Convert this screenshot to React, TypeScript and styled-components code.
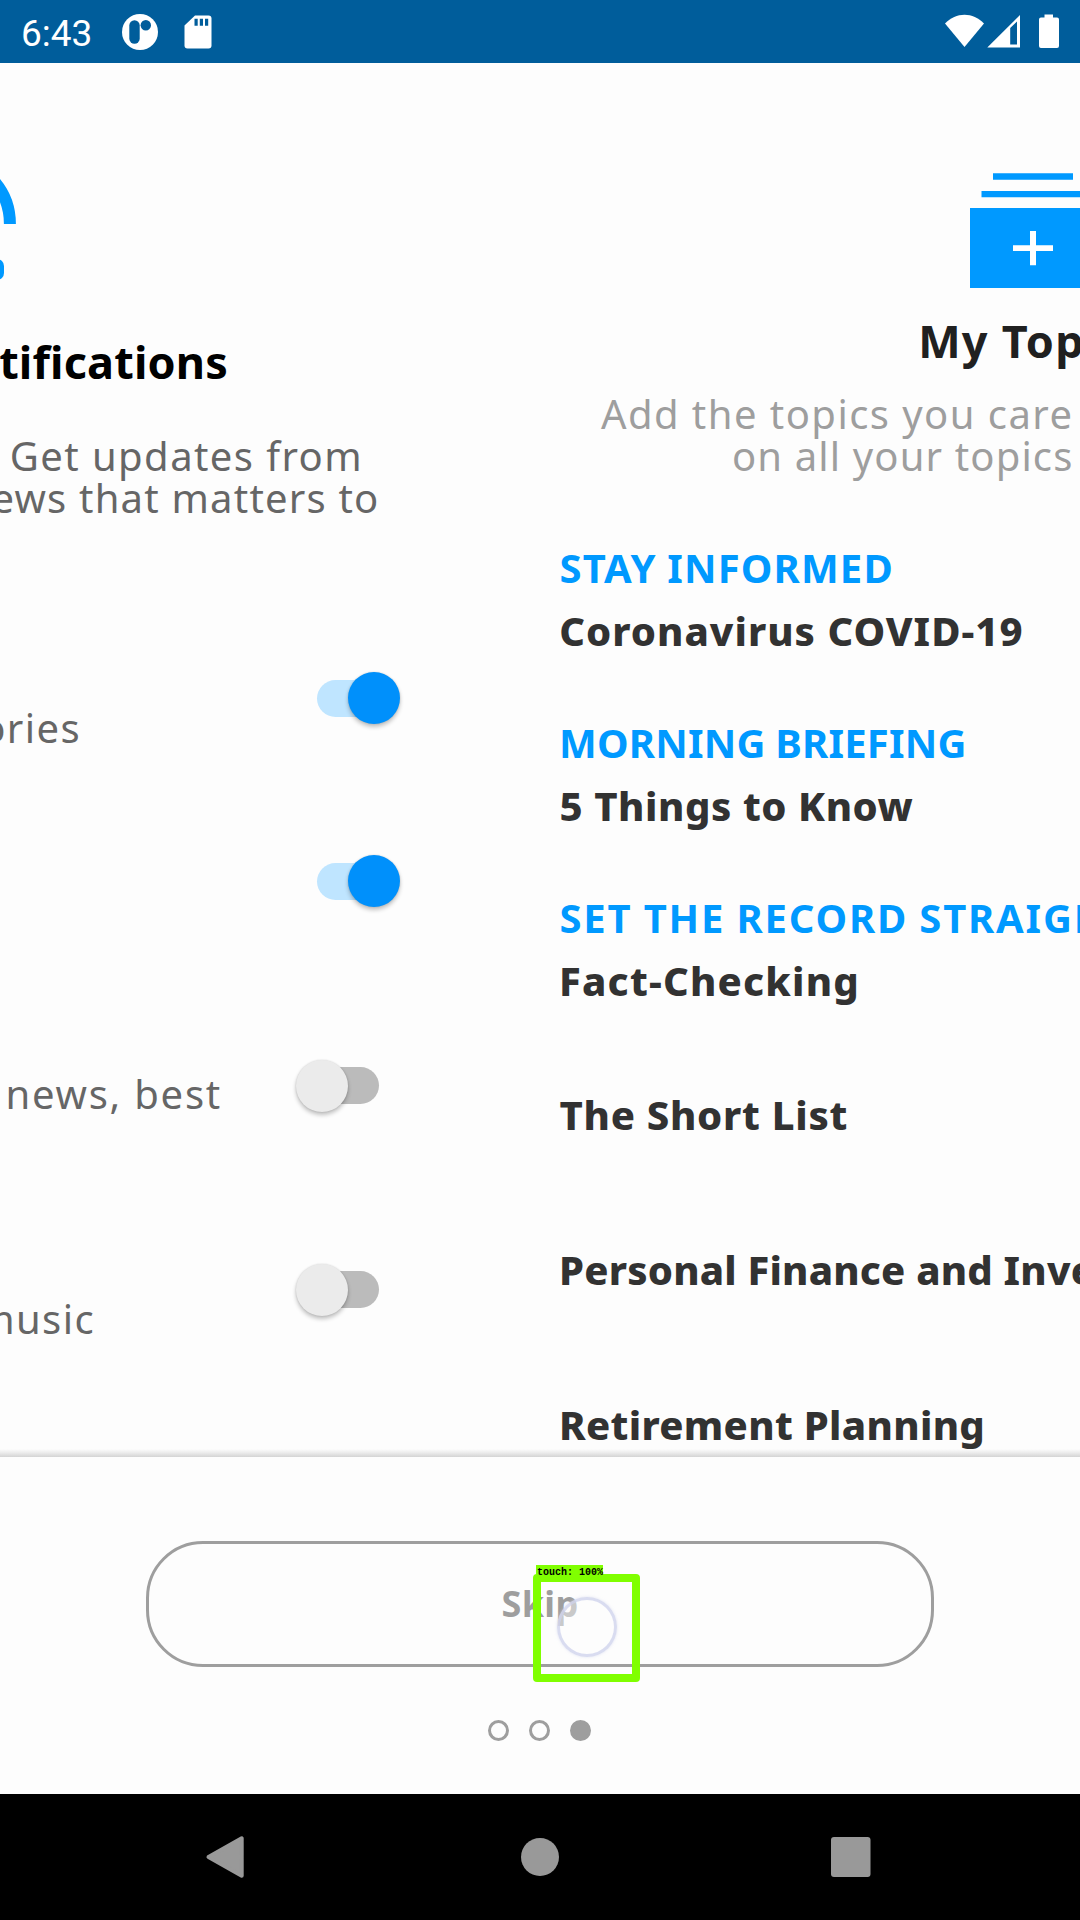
import React from "react";
import styled, { createGlobalStyle } from "styled-components";

const blue = "#0099ff";
const grey = "#9e9e9e";

const GlobalStyle = createGlobalStyle`
  * { box-sizing: border-box; }
  body { margin: 0; background: #fdfdfd; }
`;

const Screen = styled.div`
  position: relative;
  display: flex;
  flex-direction: column;
  width: 1080px;
  height: 1920px;
  overflow: hidden;
  background: #fdfdfd;
  font-family: "Noto Sans", "Liberation Sans", sans-serif;
`;

const StatusBar = styled.header`
  display: flex;
  align-items: center;
  flex: none;
  height: 63px;
  padding: 0 21px 0 21px;
  background: #005d9b;
  color: #fff;
`;

const Clock = styled.time`
  width: 101px;
  font: 400 37px/63px Roboto, sans-serif;
  padding-top: 3px;
`;

const StatusIcons = styled.div<{ $end?: boolean }>`
  display: flex;
  margin-left: ${(p) => (p.$end ? "auto" : "0")};
`;

const Pager = styled.main`
  display: flex;
  flex: none;
  height: 1394px;
  overflow: hidden;
`;

const NotificationsPage = styled.section`
  display: flex;
  flex-direction: column;
  flex: none;
  width: 493px;
  overflow: hidden;
`;

const TopicsPage = styled.section`
  display: flex;
  flex-direction: column;
  flex: none;
  width: 1080px;
`;

const BellArt = styled.svg`
  display: block;
  flex: none;
  width: 40px;
  height: 140px;
  margin-top: 87px;
`;

const StackArt = styled.svg`
  display: block;
  flex: none;
  align-self: center;
  width: 126px;
  height: 120px;
  margin-top: 107px;
`;

const Title = styled.h1<{ $color: string; $top: number; $track: number }>`
  margin: ${(p) => p.$top}px 0 0;
  color: ${(p) => p.$color};
  font-size: 45px;
  font-weight: 700;
  line-height: 60px;
  letter-spacing: ${(p) => p.$track}px;
  white-space: nowrap;
`;

const LeftTitle = styled(Title)`
  align-self: flex-end;
  padding-right: 265px;
`;

const CenterTitle = styled(Title)`
  align-self: center;
`;

const Copy = styled.div<{ $color: string; $top: number }>`
  display: flex;
  flex-direction: column;
  align-items: flex-end;
  margin-top: ${(p) => p.$top}px;
  color: ${(p) => p.$color};
`;

const CopyLine = styled.span<{ $track: number; $right: number }>`
  padding-right: ${(p) => p.$right}px;
  font-size: 40px;
  font-weight: 400;
  line-height: 42px;
  letter-spacing: ${(p) => p.$track}px;
  white-space: nowrap;
`;

const Settings = styled.div`
  display: flex;
  flex-direction: column;
  margin-top: 111px;
`;

const SettingRow = styled.div<{ $height: number }>`
  display: flex;
  flex: none;
  justify-content: space-between;
  height: ${(p) => p.$height}px;
  padding: 42.5px 93.5px 0 0;
`;

const SettingText = styled.p<{ $top: number; $width: number; $track: number }>`
  display: flex;
  justify-content: flex-end;
  width: ${(p) => p.$width}px;
  margin: ${(p) => p.$top}px 0 0;
  color: #666;
  font-size: 40px;
  font-weight: 400;
  line-height: 42px;
  letter-spacing: ${(p) => p.$track}px;
  white-space: nowrap;
`;

const Switch = styled.div`
  display: grid;
  flex: none;
  align-items: center;
  width: 104px;
  height: 52px;
  margin-left: auto;
`;

const Track = styled.span<{ $on: boolean }>`
  grid-area: 1 / 1;
  justify-self: center;
  width: 62px;
  height: 37px;
  border-radius: 19px;
  background: ${(p) => (p.$on ? "#bfe5ff" : "#bbbbbb")};
`;

const Thumb = styled.span<{ $on: boolean }>`
  grid-area: 1 / 1;
  justify-self: ${(p) => (p.$on ? "end" : "start")};
  width: 52px;
  height: 52px;
  border-radius: 50%;
  background: ${(p) => (p.$on ? "#0090fb" : "#ebebeb")};
  box-shadow: 0 3px 4px rgba(0, 0, 0, 0.24), 0 0 2px rgba(0, 0, 0, 0.14);
`;

const TopicList = styled.div`
  display: flex;
  flex-direction: column;
  padding: 59px 0 0 66px;
`;

const Topic = styled.article<{ $height: number }>`
  display: flex;
  flex-direction: column;
  flex: none;
  height: ${(p) => p.$height}px;
`;

const Kicker = styled.span<{ $track: number; $nudge: number }>`
  margin-left: ${(p) => p.$nudge}px;
  color: ${blue};
  font-size: 40px;
  font-weight: 700;
  line-height: 63px;
  letter-spacing: ${(p) => p.$track}px;
  word-spacing: -1px;
  white-space: nowrap;
`;

const Headline = styled.h2<{ $track: number; $nudge: number }>`
  margin: 0 0 0 ${(p) => p.$nudge}px;
  color: #323232;
  font-size: 40px;
  font-weight: 800;
  line-height: 63px;
  letter-spacing: ${(p) => p.$track}px;
  white-space: nowrap;
`;

const Footer = styled.footer`
  position: relative;
  display: flex;
  flex: none;
  flex-direction: column;
  align-items: center;
  height: 337px;
  padding-top: 84px;
  background: #fdfdfd;
`;

const FooterShade = styled.div`
  position: absolute;
  top: -8px;
  left: 0;
  right: 0;
  height: 8px;
  background: linear-gradient(rgba(200, 200, 200, 0), rgba(190, 190, 190, 0.3) 50%, #d4d4d4);
`;

const SkipButton = styled.button`
  width: 788px;
  height: 126px;
  padding: 0 0 1px 0;
  border: 3px solid ${grey};
  border-radius: 57px;
  background: transparent;
  color: ${grey};
  font: 700 36px/1 "Noto Sans", sans-serif;
  letter-spacing: 0.36px;
`;

const Dots = styled.div`
  display: flex;
  gap: 20px;
  margin-top: 53px;
  padding-right: 2px;
`;

const Dot = styled.span<{ $current?: boolean }>`
  width: 21px;
  height: 21px;
  border: 3px solid ${grey};
  border-radius: 50%;
  background: ${(p) => (p.$current ? grey : "transparent")};
`;

const NavBar = styled.nav`
  display: flex;
  flex: none;
  align-items: center;
  justify-content: space-between;
  height: 126px;
  padding: 0 203px 0 202px;
  background: #000;
`;

const TouchMark = styled.div`
  position: absolute;
  left: 533px;
  top: 1565px;
  display: flex;
  flex-direction: column;
  width: 107px;
`;

const TouchLabel = styled.span`
  align-self: flex-start;
  height: 12px;
  margin: 0 0 -3px 3px;
  padding-left: 1px;
  background: #80ff00;
  color: #000;
  font: 700 10px/15px "Liberation Mono", monospace;
  z-index: 1;
`;

const TouchBox = styled.div`
  display: flex;
  align-items: center;
  justify-content: center;
  width: 107px;
  height: 108px;
  border: 8px solid #80ff00;
  border-radius: 4px;
`;

const TouchRing = styled.span`
  width: 60px;
  height: 60px;
  margin: -2px 0 0 0;
  border: 3px solid rgba(205, 210, 236, 0.75);
  border-radius: 50%;
  background: rgba(253, 253, 253, 0.45);
  box-shadow: 0 0 3px rgba(205, 210, 236, 0.6);
`;

type TopicItem = {
  kicker?: string;
  title: string;
  height: number;
  kTrack?: number;
  kNudge?: number;
  track: number;
  nudge: number;
};

const topics: TopicItem[] = [
  { kicker: "STAY INFORMED", title: "Coronavirus COVID-19", height: 175, kTrack: 1.15, kNudge: 0.5, track: 1.02, nudge: 0.3 },
  { kicker: "MORNING BRIEFING", title: "5 Things to Know", height: 175, kTrack: 0.2, kNudge: 0, track: 0.57, nudge: 0.5 },
  { kicker: "SET THE RECORD STRAIGHT", title: "Fact-Checking", height: 197, kTrack: 1.82, kNudge: 0.5, track: 1.22, nudge: 0 },
  { title: "The Short List", height: 155, track: 0.72, nudge: 0.5 },
  { title: "Personal Finance and Investing", height: 155, track: 0.2, nudge: 0 },
  { title: "Retirement Planning", height: 63, track: 0.32, nudge: 0 },
];

function Toggle({ on = false }: { on?: boolean }) {
  return (
    <Switch role="switch" aria-checked={on}>
      <Track $on={on} />
      <Thumb $on={on} />
    </Switch>
  );
}

export default function App() {
  return (
    <Screen>
      <GlobalStyle />
      <StatusBar>
        <Clock>6:43</Clock>
        <StatusIcons>
          <svg width="92" height="40" viewBox="0 0 92 40">
            <circle cx="18" cy="20" r="18" fill="#fff" />
            <rect x="7.3" y="8.2" width="10.4" height="23.6" rx="5.2" fill="#005d9b" />
            <circle cx="23.8" cy="13.2" r="5.2" fill="#005d9b" />
            <path d="M73 3.5h13.5a3 3 0 0 1 3 3v27a3 3 0 0 1-3 3h-21a3 3 0 0 1-3-3V13.5z" fill="#fff" />
            <path d="M72.5 6.8h3.2v7h-3.2zM77.8 6.8h3.2v7h-3.2zM83 6.8h3.2v7H83z" fill="#005d9b" />
          </svg>
        </StatusIcons>
        <StatusIcons $end>
          <svg width="114" height="40" viewBox="0 0 114 40">
            <path d="M0 11.5C11-.2 28-.2 39 11.5L19.5 35z" fill="#fff" />
            <path fillRule="evenodd" d="M75 3v32.500H42.300zM65.200 16v16.500H72V9.500z" fill="#fff" />
            <path d="M99.500 2.500h8.500v3h4a2 2 0 0 1 2 2V34a2 2 0 0 1-2 2H96a2 2 0 0 1-2-2V7.500a2 2 0 0 1 2-2h3.500z" fill="#fff" />
          </svg>
        </StatusIcons>
      </StatusBar>

      <Pager>
        <NotificationsPage>
          <BellArt viewBox="0 0 40 140">
            <circle cx="-55.300" cy="74" r="65.200" fill="none" stroke={blue} strokeWidth="12" strokeDasharray="204.800 204.800" strokeDashoffset="-204.800" />
            <rect x="-40" y="109" width="44" height="21" rx="7" fill={blue} />
          </BellArt>
          <LeftTitle $color="#000" $top={41.5} $track={0.17}>Notifications</LeftTitle>
          <Copy $color="#666" $top={43}>
            <CopyLine $track={1.42} $right={130}>Get updates from</CopyLine>
            <CopyLine $track={1.2} $right={113.5}>news that matters to</CopyLine>
          </Copy>
          <Settings>
            <SettingRow $height={183}>
              <SettingText $top={35} $width={81} $track={1.4}>stories</SettingText>
              <Toggle on />
            </SettingRow>
            <SettingRow $height={204.5}>
              <Toggle on />
            </SettingRow>
            <SettingRow $height={204}>
              <SettingText $top={13} $width={222} $track={1.75}>news, best</SettingText>
              <Toggle />
            </SettingRow>
            <SettingRow $height={204}>
              <SettingText $top={34.500} $width={95} $track={1.4}>music</SettingText>
              <Toggle />
            </SettingRow>
          </Settings>
        </NotificationsPage>

        <TopicsPage>
          <StackArt viewBox="0 0 126 120">
            <path d="M23 3.300h80v6.500H23zM11.500 21h103v6.200h-103zM0 38h126v80H0z" fill={blue} />
            <path d="M60 61h6v14.200h17v5.800H66v14.200h-6V81H43v-5.800h17z" fill="#fff" />
          </StackArt>
          <CenterTitle $color="#202020" $top={21} $track={1.25}>My Topics</CenterTitle>
          <Copy $color={grey} $top={21.500}>
            <CopyLine $track={1.45} $right={499.5}>Add the topics you care</CopyLine>
            <CopyLine $track={1.14} $right={499.5}>on all your topics</CopyLine>
          </Copy>
          <TopicList>
            {topics.map((t) => (
              <Topic key={t.title} $height={t.height}>
                {t.kicker && (
                  <Kicker $track={t.kTrack ?? 0} $nudge={t.kNudge ?? 0}>{t.kicker}</Kicker>
                )}
                <Headline $track={t.track} $nudge={t.nudge}>{t.title}</Headline>
              </Topic>
            ))}
          </TopicList>
        </TopicsPage>
      </Pager>

      <Footer>
        <FooterShade />
        <SkipButton>Skip</SkipButton>
        <Dots>
          <Dot />
          <Dot />
          <Dot $current />
        </Dots>
      </Footer>

      <NavBar>
        <svg width="48" height="48" viewBox="0 0 48 48">
          <path d="M39.700 5.300v37.400L6.500 24z" fill="#999" stroke="#999" strokeWidth="4" strokeLinejoin="round" />
        </svg>
        <svg width="40" height="40" viewBox="0 0 40 40">
          <circle cx="20" cy="20" r="19" fill="#999" />
        </svg>
        <svg width="48" height="48" viewBox="0 0 48 48">
          <rect x="2" y="4" width="39.500" height="40" rx="3" fill="#999" />
        </svg>
      </NavBar>

      <TouchMark>
        <TouchLabel>touch: 100%</TouchLabel>
        <TouchBox>
          <TouchRing />
        </TouchBox>
      </TouchMark>
    </Screen>
  );
}
